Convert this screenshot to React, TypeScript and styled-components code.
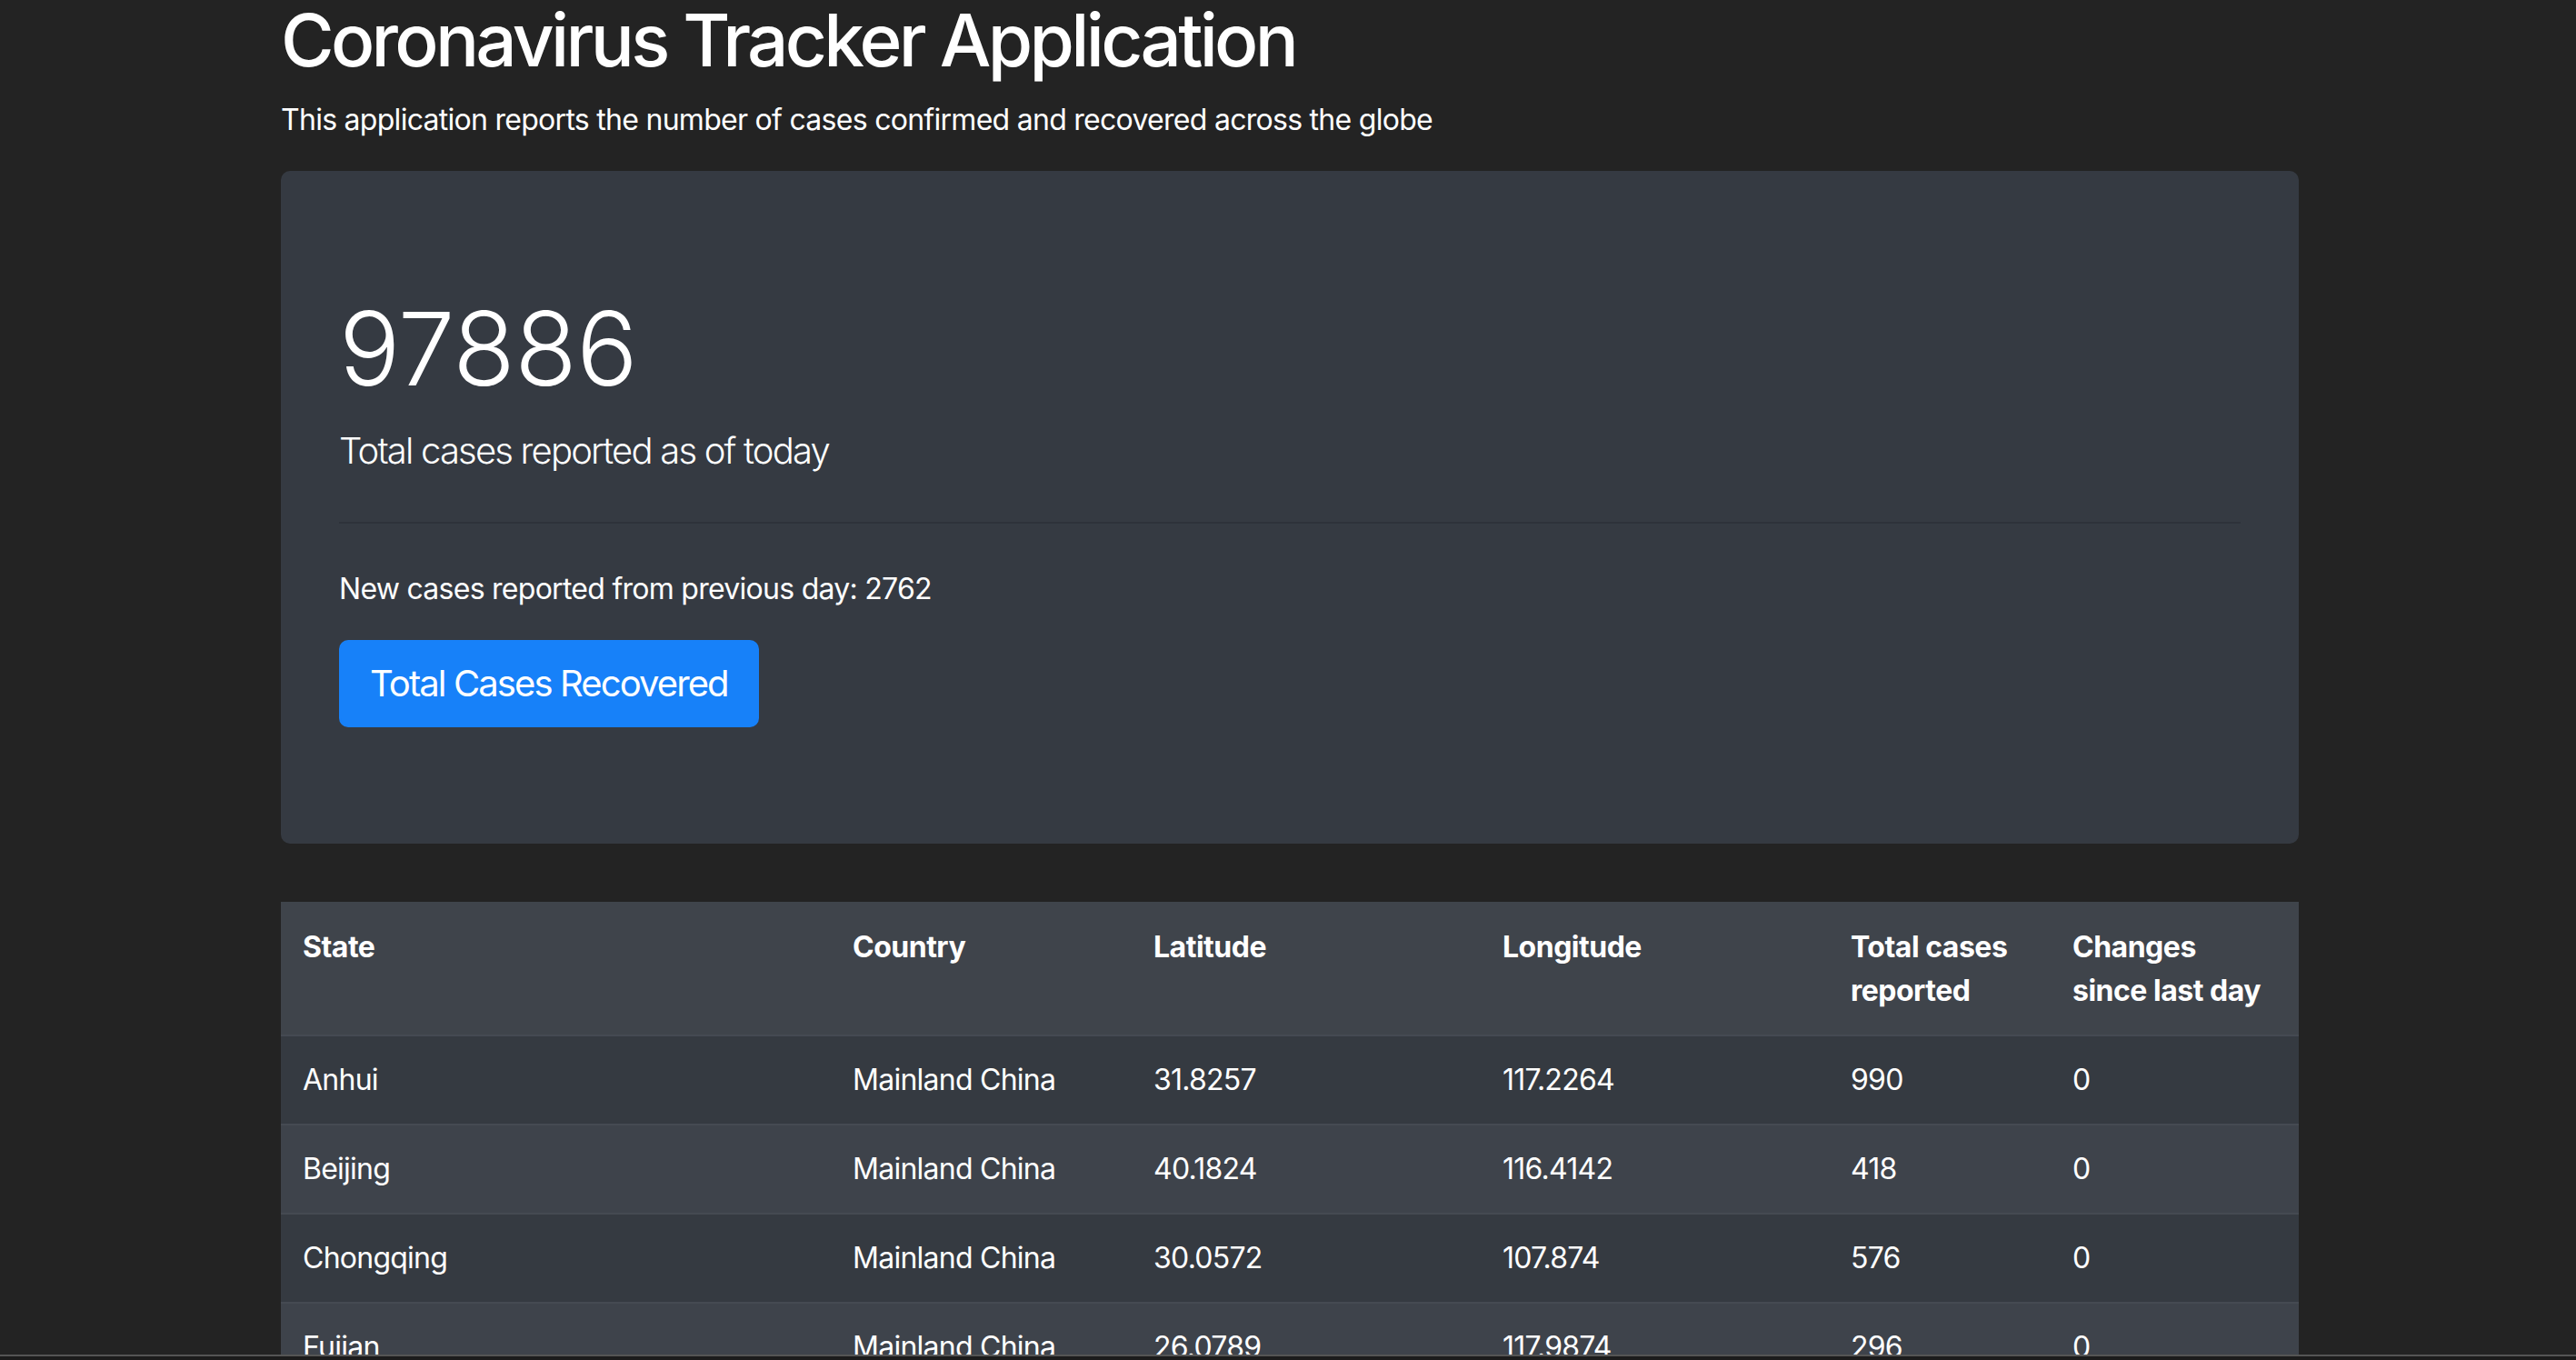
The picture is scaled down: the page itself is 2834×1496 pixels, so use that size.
import React from "react";
import styled, { createGlobalStyle } from "styled-components";

const GlobalStyle = createGlobalStyle`
  html, body {
    margin: 0;
    background: #232323;
  }
  body {
    padding: 0 0 0 4px;
    color: #ffffff;
    font-family: Inter, "Noto Sans", "Liberation Sans", sans-serif;
    -webkit-font-smoothing: antialiased;
  }
  *, *::before, *::after { box-sizing: border-box; }
`;

const Container = styled.div`
  width: 2220px;
  margin: 0 auto;
`;

const Title = styled.h1`
  margin: -4px 0 16px;
  font-size: 80px;
  font-weight: 500;
  line-height: 96px;
  letter-spacing: -3.7px;
`;

const Subtitle = styled.p`
  margin: 0 0 32px;
  font-size: 32px;
  line-height: 48px;
  font-weight: 400;
  letter-spacing: -0.72px;
`;

const Jumbotron = styled.section`
  background: #353a42;
  border-radius: 10px;
  padding: 128px 64px;
  margin-bottom: 64px;
`;

const BigNumber = styled.h2`
  margin: 0 0 16px;
  font-size: 112px;
  font-weight: 300;
  line-height: 134px;
  letter-spacing: -0.5px;
`;

const Lead = styled.p`
  margin: 0 0 32px;
  font-size: 40px;
  font-weight: 300;
  line-height: 60px;
  letter-spacing: -1.8px;
`;

const Divider = styled.hr`
  margin: 48px 0;
  border: 0;
  border-top: 2px solid rgba(0, 0, 0, 0.12);
`;

const Info = styled.p`
  margin: 0 0 32px;
  font-size: 32px;
  line-height: 48px;
  letter-spacing: -0.73px;
`;

const PrimaryButton = styled.button`
  display: block;
  padding: 16px 32px;
  border: 2px solid #1781f9;
  border-radius: 10px;
  background: #1781f9;
  color: #ffffff;
  font-family: inherit;
  font-size: 40px;
  line-height: 60px;
  font-weight: 400;
  letter-spacing: -1.9px;
  cursor: pointer;
`;

const Table = styled.table`
  width: 100%;
  table-layout: fixed;
  border-collapse: collapse;
  margin-bottom: 32px;
  font-size: 32px;
  line-height: 48px;
  letter-spacing: -0.75px;
`;

const HeadCell = styled.th`
  padding: 24px;
  text-align: left;
  vertical-align: top;
  font-weight: 700;
  letter-spacing: -0.5px;
  background: #3f444b;
  border-top: 2px solid #3f444b;
`;

const HeadLine = styled.span`
  display: block;
`;

const Row = styled.tr<{ $odd: boolean }>`
  background: ${(p) => (p.$odd ? "#353a41" : "#3e434b")};
`;

const Cell = styled.td`
  padding: 24px;
  vertical-align: top;
  border-top: 2px solid #454a52;
`;

const WindowEdge = styled.div`
  position: fixed;
  left: 0;
  right: 0;
  bottom: 0;
  height: 6px;
  background: #1c1c1c;
  border-top: 2px solid #555555;
`;

const columns: { lines: string[]; width: number }[] = [
  { lines: ["State"], width: 605 },
  { lines: ["Country"], width: 331 },
  { lines: ["Latitude"], width: 384 },
  { lines: ["Longitude"], width: 383 },
  { lines: ["Total cases", "reported"], width: 244 },
  { lines: ["Changes", "since last day"], width: 273 },
];

const rows: string[][] = [
  ["Anhui", "Mainland China", "31.8257", "117.2264", "990", "0"],
  ["Beijing", "Mainland China", "40.1824", "116.4142", "418", "0"],
  ["Chongqing", "Mainland China", "30.0572", "107.874", "576", "0"],
  ["Fujian", "Mainland China", "26.0789", "117.9874", "296", "0"],
  ["Gansu", "Mainland China", "36.0611", "103.8343", "102", "0"],
  ["Guangdong", "Mainland China", "23.3417", "113.4244", "1351", "0"],
];

export default function App() {
  return (
    <>
      <GlobalStyle />
      <Container>
        <Title>Coronavirus Tracker Application</Title>
        <Subtitle>
          This application reports the number of cases confirmed and recovered across the globe
        </Subtitle>
        <Jumbotron>
          <BigNumber>97886</BigNumber>
          <Lead>Total cases reported as of today</Lead>
          <Divider />
          <Info>New cases reported from previous day: 2762</Info>
          <PrimaryButton type="button">Total Cases Recovered</PrimaryButton>
        </Jumbotron>
        <Table>
          <colgroup>
            {columns.map((c) => (
              <col key={c.lines.join(" ")} style={{ width: c.width }} />
            ))}
          </colgroup>
          <thead>
            <tr>
              {columns.map((c) => (
                <HeadCell key={c.lines.join(" ")}>
                  {c.lines.map((l) => (
                    <HeadLine key={l}>{l}</HeadLine>
                  ))}
                </HeadCell>
              ))}
            </tr>
          </thead>
          <tbody>
            {rows.map((r, i) => (
              <Row key={r[0]} $odd={i % 2 === 0}>
                {r.map((v, j) => (
                  <Cell key={j}>{v}</Cell>
                ))}
              </Row>
            ))}
          </tbody>
        </Table>
      </Container>
      <WindowEdge />
    </>
  );
}
